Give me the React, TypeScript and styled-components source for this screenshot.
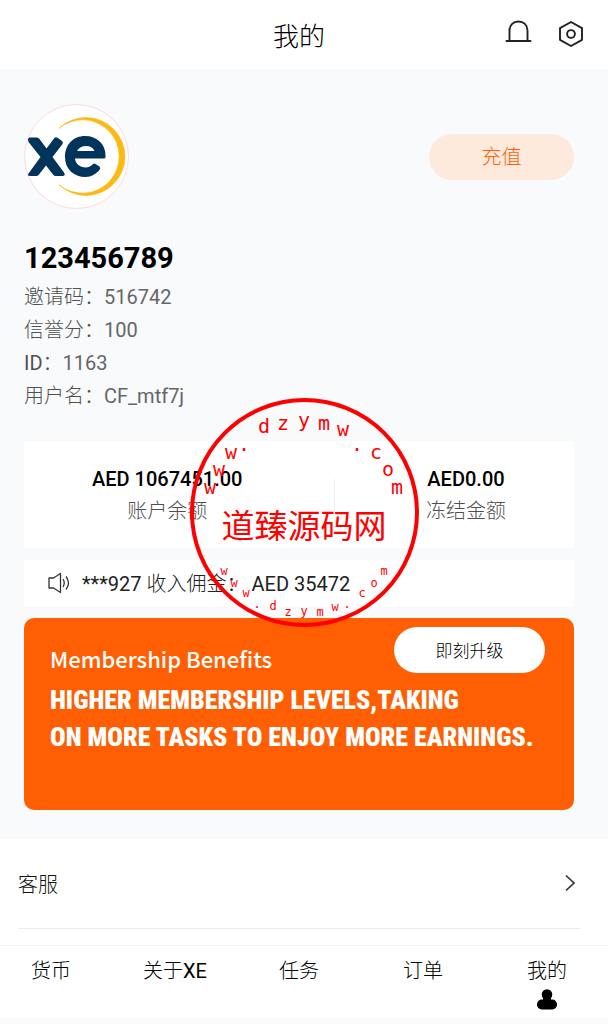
import React from "react";
import styled, { createGlobalStyle } from "styled-components";

const GlobalStyle = createGlobalStyle`
  * { box-sizing: border-box; }
  body {
    margin: 0;
    background: #f8fafc;
    color: #111;
    font-family: Roboto, "Noto Sans CJK SC Light", "Noto Sans CJK SC", sans-serif;
    font-size: 20px;
  }
  button { font-family: inherit; border: 0; padding: 0; cursor: pointer; }
  p, h1, h2, dl, dd { margin: 0; }
`;

const Page = styled.div`
  position: relative;
  min-height: 100vh;
`;

const Header = styled.header`
  display: grid;
  grid-template-columns: 1fr auto 1fr;
  align-items: center;
  height: 69px;
  padding: 0 24px 0 14px;
  background: #fff;
`;

const Title = styled.h1`
  grid-column: 2;
  padding-top: 4px;
  font-size: 26px;
  font-weight: 400;
  line-height: 36px;
  color: #000;
`;

const HeaderActions = styled.div`
  display: flex;
  justify-content: flex-end;
  gap: 26px;
`;

const IconButton = styled.button`
  display: flex;
  background: none;
  color: #222;
`;

const Profile = styled.main`
  padding: 35px 34px 29px 24px;
`;

const ProfileTop = styled.div`
  display: flex;
  align-items: center;
  justify-content: space-between;
`;

const Avatar = styled.svg`
  display: block;
  width: 105px;
  height: 105px;
`;

const PillButton = styled.button<{ $tone: "soft" | "plain" }>`
  width: ${(p) => (p.$tone === "soft" ? 145 : 151)}px;
  height: 46px;
  padding-bottom: 2px;
  border-radius: 23px;
  background: ${(p) => (p.$tone === "soft" ? "#fdeadc" : "#fff")};
  color: ${(p) => (p.$tone === "soft" ? "#ff5f02" : "#000")};
  font-size: ${(p) => (p.$tone === "soft" ? 20 : 17)}px;
  font-weight: 400;
`;

const UserName = styled.h2`
  margin-top: 32px;
  font-size: 29px;
  font-weight: 700;
  line-height: 34px;
  color: #000;
`;

const Details = styled.dl`
  margin-top: 6px;
  color: #666;
  line-height: 33px;
`;

const Detail = styled.div`
  display: flex;

  dt { color: #505050; }
`;

const Balances = styled.section`
  display: flex;
  align-items: center;
  justify-content: space-between;
  height: 107px;
  margin-top: 28px;
  padding: 0 68px;
  background: #fff;
`;

const Balance = styled.div`
  text-align: center;
  line-height: 32px;
`;

const Amount = styled.p`
  font-weight: 500;
  color: #000;
`;

const Label = styled.p`
  color: #505050;
`;

const Divider = styled.span`
  width: 1px;
  height: 32px;
  background: #eee;
`;

const Notice = styled.section`
  display: flex;
  align-items: center;
  gap: 11px;
  height: 47px;
  margin-top: 12px;
  padding: 0 24px 2px;
  background: #fff;
  color: #222;
`;

const Banner = styled.section`
  display: flex;
  align-items: flex-start;
  align-content: flex-start;
  justify-content: space-between;
  flex-wrap: wrap;
  min-height: 192px;
  margin-top: 11px;
  padding: 9px 29px 0 26px;
  border-radius: 10px;
  background: #ff5f02;
  color: #fff;
`;

const BannerTitle = styled.h2`
  margin-top: 14px;
  font-family: "Noto Sans CJK SC", sans-serif;
  font-size: 22px;
  font-weight: 500;
  line-height: 34px;
`;

const BannerText = styled.p`
  width: 100%;
  margin-top: 7px;
  font-family: "Roboto Condensed", Roboto, sans-serif;
  font-size: 26px;
  font-weight: 900;
  line-height: 37px;
`;

const Menu = styled.section`
  padding: 0 28px 16px 18px;
  background: #fff;
`;

const MenuLink = styled.a`
  display: flex;
  align-items: center;
  justify-content: space-between;
  height: 90px;
  padding-right: 4px;
  border-bottom: 1px solid #ececec;
  color: #111;
  text-decoration: none;
`;

const TabBar = styled.nav`
  display: flex;
  justify-content: space-between;
  height: 73px;
  padding: 10px 28px 0 18px;
  border-top: 1px solid #f3f3f5;
  background: #fff;
`;

const Tab = styled.a`
  display: flex;
  flex-direction: column;
  align-items: center;
  gap: 2px;
  width: 66px;
  color: #000;
  line-height: 31px;
  text-decoration: none;
  white-space: nowrap;
`;

const Stamp = styled.svg`
  position: absolute;
  top: 398px;
  left: 50%;
  width: 229px;
  height: 229px;
  margin-left: -114px;
  pointer-events: none;
`;

const details = [
  ["邀请码", "516742"],
  ["信誉分", "100"],
  ["ID", "1163"],
  ["用户名", "CF_mtf7j"],
];

const tabs = ["货币", "关于XE", "任务", "订单", "我的"];

type Glyph = [string, number, number];

const upperArc: Glyph[] = [
  ["w", 20, 96], ["w", 29, 78], ["w", 41, 61], [".", 54, 53],
  ["d", 74, 35], ["z", 93, 32], ["y", 114, 29], ["m", 134, 32], ["w", 153, 38],
  [".", 167, 53], ["c", 186, 61], ["o", 198, 78], ["m", 207, 96],
];

const lowerArc: Glyph[] = [
  ["w", 34, 177], ["w", 44, 189], ["w", 56, 199], [".", 67, 210],
  ["d", 83, 212], ["z", 98, 218], ["y", 114, 217], ["m", 130, 218], ["w", 145, 213],
  [".", 157, 210], ["c", 172, 199], ["o", 184, 189], ["m", 194, 177],
];

const Arc = ({ glyphs, size }: { glyphs: Glyph[]; size: number }) => (
  <g fontFamily="DejaVu Sans Mono, monospace" fontSize={size}>
    {glyphs.map(([char, x, y]) => (
      <text key={`${x}-${y}`} x={x} y={y}>{char}</text>
    ))}
  </g>
);

const XeLogo = () => (
  <Avatar viewBox="0 0 105 105" role="img" aria-label="xe">
    <circle cx="52.5" cy="52.5" r="52" fill="#fff" stroke="#fccfd2" strokeWidth="0.8" />
    <path
      d="M35 24.300A39 39 0 1 1 35 80.700A36.700 36.700 0 1 0 35 24.300Z"
      fill="#fdb913"
      stroke="#fdb913"
      strokeWidth="0.6"
      strokeLinejoin="round"
    />
    <path
      d="M4 35.500Q4 33.500 6 33.500H13Q14.500 33.500 15.500 35L22.500 44.500L30 34.500Q31.500 32.500 33.500 33.800L38 37Q39.500 38.500 38.500 40L28.500 53L40 68.500Q42 72 38.500 72H32Q30 72 29 70.500L22 61.500L15 70.500Q14 72 12 72H6Q3 72 4.500 69.500L16.500 53L4.500 38Z"
      fill="#00345b"
    />
    <path
      fillRule="evenodd"
      d="M61 32C73 32 81.500 40 81.500 51.500V53Q81.500 54.500 80 54.500H51C51.500 60 56 63.500 61.500 63.500C64.500 63.500 66.500 62.500 68.500 60.500Q70 59 71.500 60L75.500 62.500Q77 64 75.500 66C72.500 69.500 67.500 73 61.500 73C49.500 73 41 65 41 53C41 40.500 49.500 32 61 32ZM53 47H70.500C69 43.500 66 42 62 42C58 42 55 43.500 53 47Z"
      fill="#00345b"
    />
  </Avatar>
);

export default function App() {
  return (
    <Page>
      <GlobalStyle />
      <Header>
        <Title>我的</Title>
        <HeaderActions>
          <IconButton aria-label="通知">
            <svg width="28" height="30" viewBox="0 0 28 30" fill="none" stroke="currentColor" strokeWidth="1.9" strokeLinecap="round">
              <path d="M5.500 20.500V10.500C5.500 5 9.500 1.500 14.500 1.500S23.500 5 23.500 10.500V20.500M2.500 21H26.500" />
            </svg>
          </IconButton>
          <IconButton aria-label="设置">
            <svg width="26" height="28" viewBox="0 0 26 28" fill="none" stroke="currentColor" strokeWidth="1.9" strokeLinejoin="round">
              <path d="M13 2L24 8.200V19.800L13 26L2 19.800V8.200Z" />
              <circle cx="13" cy="14" r="3.9" />
            </svg>
          </IconButton>
        </HeaderActions>
      </Header>

      <Profile>
        <ProfileTop>
          <XeLogo />
          <PillButton $tone="soft">充值</PillButton>
        </ProfileTop>
        <UserName>123456789</UserName>
        <Details>
          {details.map(([name, value]) => (
            <Detail key={name}>
              <dt>{name}：</dt>
              <dd>{value}</dd>
            </Detail>
          ))}
        </Details>

        <Balances>
          <Balance>
            <Amount>AED 1067451.00</Amount>
            <Label>账户余额</Label>
          </Balance>
          <Divider />
          <Balance>
            <Amount>AED0.00</Amount>
            <Label>冻结金额</Label>
          </Balance>
        </Balances>

        <Notice>
          <svg width="23" height="22" viewBox="0 0 23 22" fill="none" stroke="#333" strokeWidth="1.3">
            <path d="M1 6H5.500L12.500 1.500V20.500L5.500 16H1Z" strokeLinejoin="round" />
            <path d="M15 7Q17.500 11 15 15M18 4.500Q23 11 18 17.500" />
          </svg>
          <p>***927 收入佣金： AED 35472</p>
        </Notice>

        <Banner>
          <BannerTitle>Membership Benefits</BannerTitle>
          <PillButton $tone="plain">即刻升级</PillButton>
          <BannerText>
            HIGHER MEMBERSHIP LEVELS,TAKING
            <br />
            ON MORE TASKS TO ENJOY MORE EARNINGS.
          </BannerText>
        </Banner>
      </Profile>

      <Menu>
        <MenuLink href="#service">
          客服
          <svg width="12" height="20" viewBox="0 0 12 20" fill="none" stroke="#333" strokeWidth="1.7">
            <path d="M2 1.500L10 9L2 16.500" />
          </svg>
        </MenuLink>
      </Menu>

      <TabBar>
        {tabs.map((tab) => (
          <Tab key={tab} href="#tab">
            {tab}
            {tab === "我的" && (
              <svg width="20" height="21" viewBox="0 0 20 21" fill="#000">
                <circle cx="10" cy="5.500" r="5.300" />
                <path d="M6 7H14V13H6Z" />
                <rect x="0" y="10.500" width="20" height="10" rx="4.700" />
              </svg>
            )}
          </Tab>
        ))}
      </TabBar>

      <Stamp viewBox="0 0 229 229" fill="#f00" textAnchor="middle">
        <circle cx="114.500" cy="114.500" r="112.500" fill="none" stroke="#f00" strokeWidth="4" />
        <Arc glyphs={upperArc} size={20} />
        <text x="114" y="140" fontSize="33" fontFamily="Noto Sans CJK SC, sans-serif">道臻源码网</text>
        <Arc glyphs={lowerArc} size={12} />
      </Stamp>
    </Page>
  );
}
